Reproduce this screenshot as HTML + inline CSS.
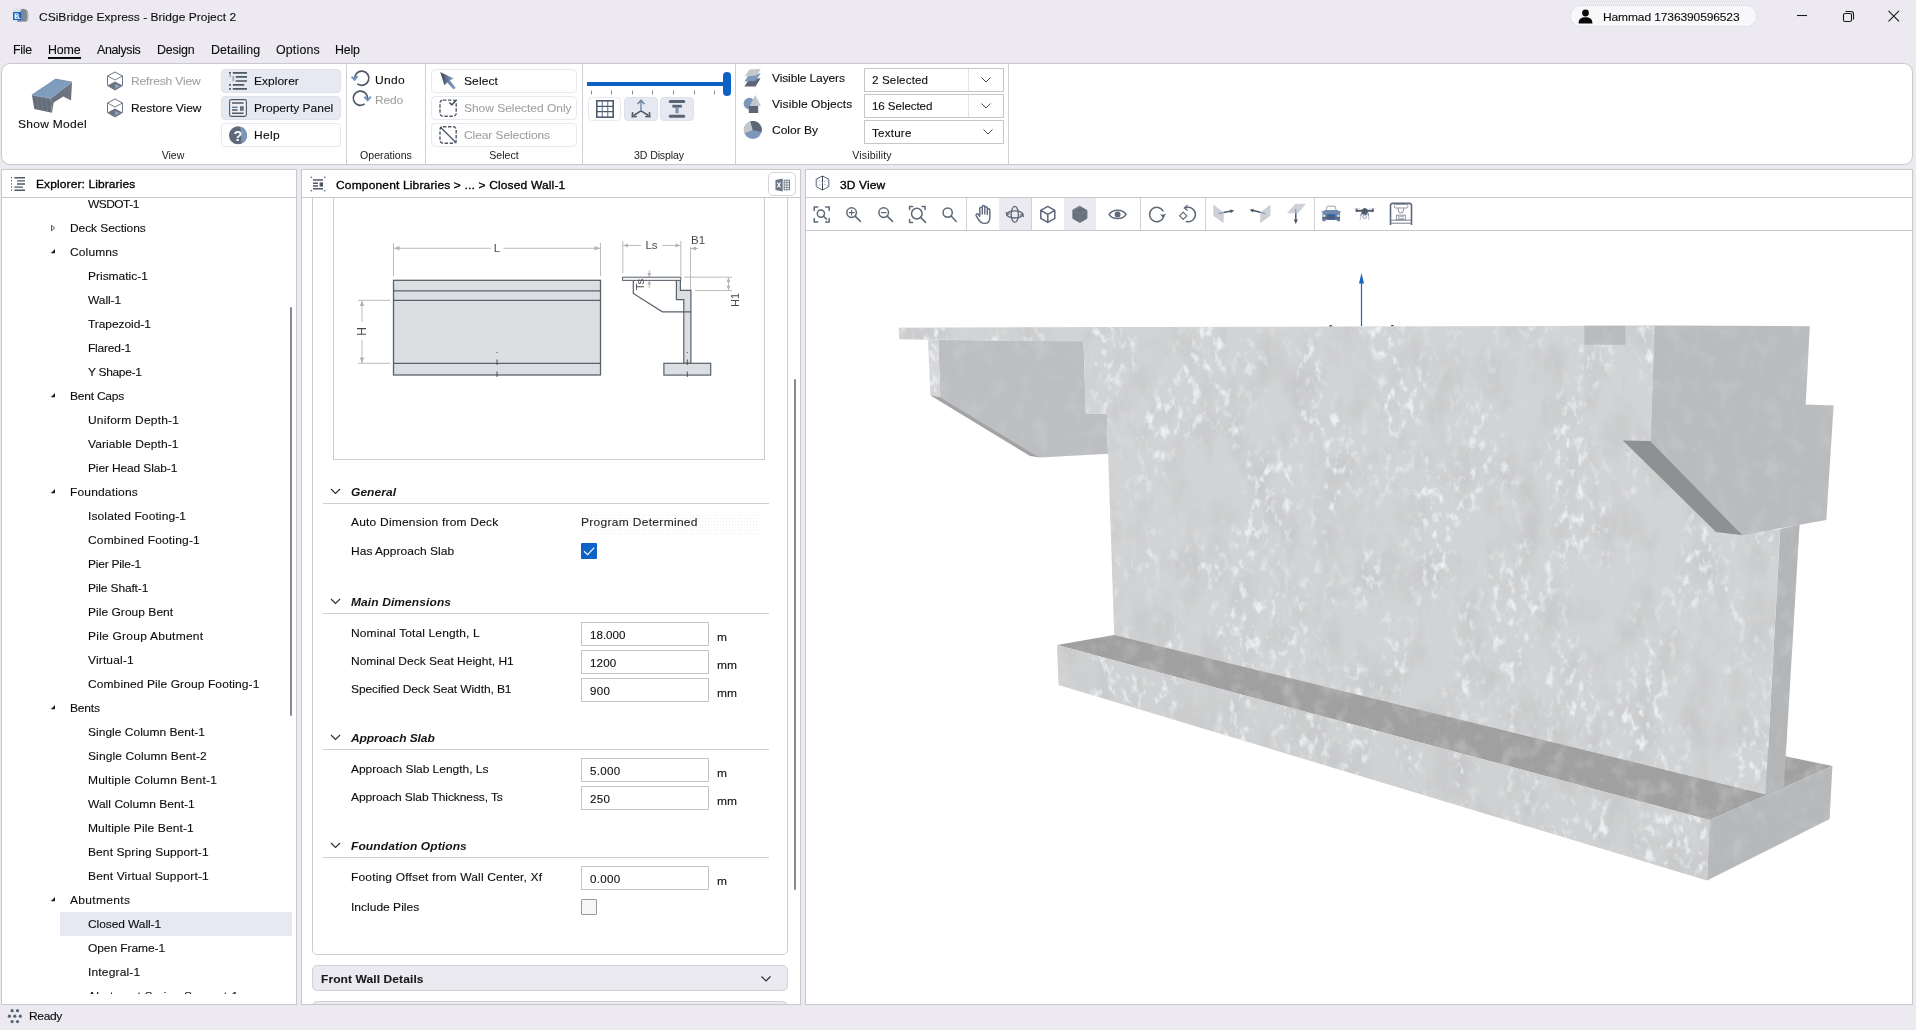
<!DOCTYPE html>
<html lang="en">
<head>
<meta charset="utf-8">
<title>CSiBridge Express - Bridge Project 2</title>
<style>
*{box-sizing:border-box;margin:0;padding:0}
html,body{width:1916px;height:1030px;overflow:hidden;background:#eceaf0}
body{will-change:transform;font-family:"Liberation Sans",sans-serif;font-size:12px;color:#111;position:relative}
.a{position:absolute}
.t{position:absolute;white-space:nowrap;line-height:14px;height:14px;font-size:11.5px;transform:scaleX(1.0435);transform-origin:0 0;color:#0c0c0c;-webkit-text-stroke:0.1px #0c0c0c}
.g{color:#a0a0a0;-webkit-text-stroke:0.08px #a0a0a0}
.panel{position:absolute;background:#fff;border:1px solid #c9c9cb}
.hsep{position:absolute;height:1px;background:#c9c9cb}
.vsep{position:absolute;width:1px;background:#d0d0d2}
.btn{position:absolute;border:1px solid #e8e8ee;border-radius:4px;background:#fff}
.btn.on{background:#e6e9f1;border-color:#dfe2ea}
.gl{position:absolute;white-space:nowrap;font-size:10.2px;transform:scaleX(1.04);line-height:13px;color:#1a1a1a;text-align:center}
.combo{position:absolute;border:1px solid #c6c6c8;background:#fff;height:23px}
.inp{position:absolute;border:1px solid #c4c4c6;background:#fff;height:24px;width:128px;left:581px}
.hd{position:absolute;white-space:nowrap;line-height:14px;font-size:11.5px;transform:scaleX(1.0435);transform-origin:0 0;font-weight:bold;font-style:italic;color:#141414;left:351px}
.ul{position:absolute;height:1px;background:#cfcfd1;left:323px;width:446px}
svg{position:absolute;overflow:visible}
</style>
</head>
<body>
<!-- TITLE BAR -->
<svg class="a" style="left:12px;top:7px" width="18" height="16" viewBox="0 0 18 16">
  <path d="M1.2 2.6 C3 0.9 6 0.5 9.2 1.6 L11.2 3.2 L9 12.5 L2 10 Z" fill="#d5d9df"/>
  <path d="M3.4 1.6 L4.4 4 M5.6 1.1 L6.4 3.6" stroke="#f4f5f7" stroke-width="0.9"/>
  <path d="M5.2 14.7 L9.2 2.4 C10.6 1.2 13.4 1.8 15.6 4.2 C16.8 7.4 16.6 11.4 15 14.5 Z" fill="#7c8795"/>
  <path d="M14.6 4 C15.9 7 15.8 11 14.6 13.6" stroke="#c9d0da" stroke-width="0.7" fill="none"/>
  <rect x="1" y="5.1" width="8.2" height="8" fill="#1565c0"/>
  <path d="M2.6 6.4 H5.4 V11.9 H2.6 Z" fill="#fff"/>
  <path d="M5.4 6.4 C7.4 6.4 7.4 8.9 5.4 8.9 C7.9 8.9 7.9 11.9 5.4 11.9" fill="#fff"/>
  <path d="M3.8 7.7 H5.2 M3.8 10.4 H5.6" stroke="#1565c0" stroke-width="0.9"/>
  <rect x="7.2" y="10.9" width="1.1" height="1.1" fill="#fff"/>
</svg>
<div class="t" style="left:39px;top:10px;letter-spacing:0.01px">CSiBridge Express - Bridge Project 2</div>

<div class="a" style="left:1570px;top:5px;width:187px;height:22px;border:1px dotted #cdcdd4;border-radius:11px;background:#f8f8fb"></div>
<svg class="a" style="left:1578px;top:9px" width="15" height="15" viewBox="0 0 15 15">
  <circle cx="7.5" cy="4" r="3.4" fill="#0a0a0a"/>
  <path d="M0.6 14.5 C0.6 9.5 3.5 8.2 7.5 8.2 C11.5 8.2 14.4 9.5 14.4 14.5 Z" fill="#0a0a0a"/>
</svg>
<div class="t" style="left:1603px;top:10px;letter-spacing:-0.11px">Hammad 1736390596523</div>

<svg class="a" style="left:1790px;top:5px" width="120" height="24" viewBox="0 0 120 24">
  <path d="M7 10.5 H17" stroke="#1a1a1a" stroke-width="1.1" fill="none"/>
  <rect x="53.5" y="8.5" width="8" height="8" rx="1.6" fill="none" stroke="#1a1a1a" stroke-width="1.1"/>
  <path d="M55.5 6.5 H61 a2.5 2.5 0 0 1 2.5 2.5 V14.5" fill="none" stroke="#1a1a1a" stroke-width="1.1"/>
  <path d="M98.5 5.8 L109 16.3 M109 5.8 L98.5 16.3" stroke="#1a1a1a" stroke-width="1.1" fill="none"/>
</svg>

<!-- MENU BAR -->
<div class="t" style="left:13px;top:43px;font-size:11.9px;letter-spacing:-0.26px">File</div>
<div class="t" style="left:48px;top:43px;font-size:11.9px;letter-spacing:-0.12px">Home</div>
<div class="a" style="left:48px;top:57px;width:33px;height:2px;background:#0c0c0c"></div>
<div class="t" style="left:97px;top:43px;font-size:11.9px;letter-spacing:-0.33px">Analysis</div>
<div class="t" style="left:157px;top:43px;font-size:11.9px;letter-spacing:-0.18px">Design</div>
<div class="t" style="left:211px;top:43px;font-size:11.9px;letter-spacing:0.1px">Detailing</div>
<div class="t" style="left:276px;top:43px;font-size:11.9px;letter-spacing:0.15px">Options</div>
<div class="t" style="left:335px;top:43px;font-size:11.9px;letter-spacing:-0.16px">Help</div>
<!-- RIBBON -->
<div class="a" style="left:1px;top:63px;width:1912px;height:102px;background:#fff;border:1px solid #c9c9cb;border-radius:9px"></div>
<div class="vsep" style="left:346px;top:64px;height:100px"></div>
<div class="vsep" style="left:425px;top:64px;height:100px"></div>
<div class="vsep" style="left:582px;top:64px;height:100px"></div>
<div class="vsep" style="left:735px;top:64px;height:100px"></div>
<div class="vsep" style="left:1008px;top:64px;height:100px"></div>

<!-- Show Model icon -->
<svg class="a" style="left:30px;top:77px" width="44" height="38" viewBox="0 0 44 38">
  <path d="M1.9 18.1 L25.7 2.1 L42 5.2 L20.6 21.5 Z" fill="#809dc0"/>
  <path d="M1.9 18.1 L20.6 21.5 L22 35.7 L4.3 32 Z" fill="#656d79"/>
  <path d="M20.6 21.5 L42 5.2 L41 23.5 L33.2 19.4 L23.7 25.5 L22 35.7 Z" fill="#6a727e"/>
  <path d="M7 20 L8.6 32.6 M11.5 20.8 L13 33.6 M16 21.6 L17.6 34.6 M36 11 L35.6 20.4 M39 8.6 L38.6 22" stroke="#7a838f" stroke-width="0.7" fill="none"/>
  <path d="M1.9 18.1 L25.7 2.1 L42 5.2" fill="none" stroke="#718aaa" stroke-width="0.9"/>
  <path d="M1.9 18.1 L20.6 21.5 L42 5.2" fill="none" stroke="#8ea7c6" stroke-width="0.6"/>
</svg>
<div class="t" style="left:18px;top:117px;letter-spacing:0.27px">Show Model</div>

<!-- Refresh / Restore view -->
<svg class="a" style="left:106px;top:71px" width="18" height="20" viewBox="0 0 18 20">
  <path d="M9 1 L16.5 5 L16.5 14.5 L9 19 L1.5 14.5 L1.5 5 Z" fill="#fff" stroke="#6b7482" stroke-width="1"/>
  <path d="M1.5 5 L9 9 L16.5 5" fill="none" stroke="#6b7482" stroke-width="0.9"/>
  <path d="M9 10.5 L16.5 14.5 L9 19 L1.5 14.5 Z" fill="#6b7482"/>
  <path d="M9 13 L14 15 L9 18 Z" fill="#86a0c2"/>
</svg>
<div class="t g" style="left:131px;top:74px;letter-spacing:-0.12px">Refresh View</div>
<svg class="a" style="left:106px;top:98px" width="18" height="20" viewBox="0 0 18 20">
  <path d="M9 1 L16.5 5 L16.5 14.5 L9 19 L1.5 14.5 L1.5 5 Z" fill="#fff" stroke="#6b7482" stroke-width="1"/>
  <path d="M1.5 5 L9 9 L16.5 5" fill="none" stroke="#6b7482" stroke-width="0.9"/>
  <path d="M9 10.5 L16.5 14.5 L9 19 L1.5 14.5 Z" fill="#6b7482"/>
  <path d="M9 13 L14 15 L9 18 Z" fill="#86a0c2"/>
</svg>
<div class="t" style="left:131px;top:101px;letter-spacing:-0.06px">Restore View</div>

<!-- Explorer / Property Panel / Help buttons -->
<div class="btn on" style="left:221px;top:69px;width:120px;height:24px"></div>
<div class="btn on" style="left:221px;top:96px;width:120px;height:24px"></div>
<div class="btn" style="left:221px;top:123px;width:120px;height:24px"></div>
<svg class="a" style="left:228px;top:71px" width="20" height="20" viewBox="0 0 20 20">
  <path d="M4.8 1.8 H19 M7.7 5.9 H19 M7.7 10 H19 M4.8 13.9 H16.2 M4.8 17.9 H19" stroke="#4e5968" stroke-width="1.7" fill="none"/>
  <g fill="#4e5968"><rect x="1" y="1" width="1.8" height="1.8"/><rect x="1" y="13" width="1.8" height="1.8"/><rect x="1" y="17" width="1.8" height="1.8"/></g>
  <path d="M2.2 3.4 V6 M5.2 5 V10.2" stroke="#4e5968" stroke-width="0.7" fill="none"/>
</svg>
<div class="t" style="left:254px;top:74px;letter-spacing:0.02px">Explorer</div>
<svg class="a" style="left:229px;top:99px" width="18" height="18" viewBox="0 0 18 18">
  <rect x="0.6" y="0.6" width="16.8" height="16.8" rx="1.8" fill="#eef0f5" stroke="#4e5968" stroke-width="1.1"/>
  <path d="M3 4 H14.6 M3 11 H8.6 M3 14.2 H14.6" stroke="#4e5968" stroke-width="1.6" fill="none"/>
  <path d="M3 8.3 H8.6" stroke="#5f7fa8" stroke-width="1.5" fill="none"/>
  <rect x="11" y="7.2" width="3.7" height="4.6" fill="#68727f"/>
</svg>
<div class="t" style="left:254px;top:101px;letter-spacing:-0.01px">Property Panel</div>
<svg class="a" style="left:228px;top:126px" width="20" height="19" viewBox="0 0 20 19">
  <circle cx="10" cy="9.3" r="9" fill="#5d6878"/>
  <path d="M11.5 0.5 A9 9 0 0 1 13.5 17.6 C13 12 14 5 11.5 0.5 Z" fill="#7d97bb"/>
  <text x="10" y="14.6" text-anchor="middle" font-family="Liberation Sans, sans-serif" font-size="14.5" font-weight="bold" fill="#fff">?</text>
</svg>
<div class="t" style="left:254px;top:128px;letter-spacing:0.34px">Help</div>
<div class="gl" style="left:143px;top:149px;width:60px;letter-spacing:-0.03px">View</div>

<!-- Operations -->
<svg class="a" style="left:351px;top:69px" width="19" height="19" viewBox="0 0 19 19">
  <path d="M3.7 9.8 A7.1 7.1 0 1 1 6.9 15.1" fill="none" stroke="#4e5968" stroke-width="1.7" stroke-linecap="round"/>
  <path d="M0.6 7.6 L3.6 10.8 L6.6 7.2" fill="none" stroke="#7394c0" stroke-width="2"/>
</svg>
<div class="t" style="left:375px;top:73px;letter-spacing:0.35px">Undo</div>
<svg class="a" style="left:352px;top:90px" width="20" height="17" viewBox="0 0 20 17">
  <path d="M15.5 8.6 A7.1 7.1 0 1 0 12 14.3" fill="none" stroke="#4e5968" stroke-width="1.7" stroke-linecap="round"/>
  <path d="M12.4 6.8 L15.6 10.2 L18.8 6.6" fill="none" stroke="#7394c0" stroke-width="2"/>
</svg>
<div class="t g" style="left:375px;top:93px;letter-spacing:-0.2px">Redo</div>
<div class="gl" style="left:356px;top:149px;width:60px;letter-spacing:-0.0px">Operations</div>

<!-- Select -->
<div class="btn" style="left:431px;top:69px;width:146px;height:24px"></div>
<div class="btn" style="left:431px;top:96px;width:146px;height:24px"></div>
<div class="btn" style="left:431px;top:123px;width:146px;height:24px"></div>
<svg class="a" style="left:439px;top:71px" width="18" height="20" viewBox="0 0 18 20">
  <defs><linearGradient id="cg" x1="0" y1="0" x2="1" y2="0"><stop offset="0.2" stop-color="#4a5463"/><stop offset="0.55" stop-color="#6f86a6"/><stop offset="1" stop-color="#7d9bc4"/></linearGradient></defs>
  <path d="M1.2 0.9 L14.6 7.6 L10.8 9.3 L16.6 16.8 L14.6 18.5 L8.3 11.4 L5.4 14.3 Z" fill="url(#cg)"/>
</svg>
<div class="t" style="left:464px;top:74px;letter-spacing:0.1px">Select</div>
<svg class="a" style="left:439px;top:98px" width="19" height="19" viewBox="0 0 19 19">
  <rect x="1" y="2.1" width="16.2" height="16.2" rx="3" fill="none" stroke="#4e5968" stroke-width="1.4" stroke-dasharray="3.4 1.6"/>
  <path d="M10.4 4.6 L12.9 6.8 L17.6 1.6" fill="none" stroke="#4e5968" stroke-width="1.6"/>
</svg>
<div class="t g" style="left:464px;top:101px;letter-spacing:-0.03px">Show Selected Only</div>
<svg class="a" style="left:439px;top:125px" width="19" height="19" viewBox="0 0 19 19">
  <rect x="1" y="1.8" width="16.2" height="16.4" rx="3" fill="none" stroke="#4e5968" stroke-width="1.4" stroke-dasharray="3.4 1.6"/>
  <path d="M1.2 2 L17.4 18" fill="none" stroke="#4e5968" stroke-width="1.3"/>
</svg>
<div class="t g" style="left:464px;top:128px;letter-spacing:-0.08px">Clear Selections</div>
<div class="gl" style="left:474px;top:149px;width:60px">Select</div>

<!-- 3D Display -->
<div class="a" style="left:587px;top:82px;width:139px;height:4px;background:#0b61c4"></div>
<div class="a" style="left:723px;top:72px;width:8px;height:24px;background:#0b61c4;border-radius:4px"></div>
<svg class="a" style="left:587px;top:90px" width="135" height="5" viewBox="0 0 135 5">
  <path d="M4.5 0.5 V4.5 M24.5 0.5 V4.5 M45.5 0.5 V4.5 M65.5 0.5 V4.5 M86.5 0.5 V4.5 M107.5 0.5 V4.5 M127.5 0.5 V4.5" stroke="#8b8b8e" stroke-width="1"/>
</svg>
<div class="btn" style="left:588px;top:97px;width:33px;height:24px"></div>
<div class="btn on" style="left:624px;top:97px;width:34px;height:24px"></div>
<div class="btn on" style="left:660px;top:97px;width:34px;height:24px"></div>
<svg class="a" style="left:596px;top:100px" width="18" height="18" viewBox="0 0 18 18">
  <path d="M6.3 1 V17 M11.7 1 V17" stroke="#7890b2" stroke-width="1.3"/>
  <path d="M1 6.3 H17 M1 11.7 H17" stroke="#505b6a" stroke-width="1.3"/>
  <rect x="0.8" y="0.8" width="16.4" height="16.4" fill="none" stroke="#505b6a" stroke-width="1.6"/>
</svg>
<svg class="a" style="left:631px;top:99px" width="20" height="20" viewBox="0 0 20 20">
  <path d="M10 11.8 V2.5" stroke="#7890b2" stroke-width="1.5" fill="none"/>
  <path d="M10 11.8 L2.5 16.5 M10 11.8 L17.5 16.5" stroke="#505b6a" stroke-width="1.5" fill="none"/>
  <path d="M6.6 5 L10 1.4 L13.4 5" fill="none" stroke="#6b7f9c" stroke-width="1.5"/>
  <path d="M1.6 13 L1.2 17.6 L5.8 17.4" fill="none" stroke="#505b6a" stroke-width="1.5"/>
  <path d="M18.4 13 L18.8 17.6 L14.2 17.4" fill="none" stroke="#505b6a" stroke-width="1.5"/>
</svg>
<svg class="a" style="left:668px;top:100px" width="18" height="18" viewBox="0 0 18 18">
  <path d="M2.2 1.6 H15.8 M2.2 16.3 H15.8" stroke="#5a6472" stroke-width="3" stroke-linecap="round"/>
  <rect x="4.4" y="4.8" width="9.4" height="2.8" fill="#5a6472"/>
  <rect x="7.5" y="7.4" width="3.1" height="5.8" fill="#7890b2"/>
</svg>
<div class="gl" style="left:629px;top:149px;width:60px;letter-spacing:-0.13px">3D Display</div>

<!-- Visibility -->
<svg class="a" style="left:743px;top:68px" width="19" height="20" viewBox="0 0 19 20">
  <path d="M6.2 11 L17.6 10.2 L12.6 18.4 L1.4 18.6 Z" fill="#5d6674"/>
  <path d="M6.2 6.2 L17.6 5.6 L12.4 13 L1.4 13.4 Z" fill="#7d97bb"/>
  <path d="M6.4 1.4 L17.8 1 L13.6 7.4 L1.8 8.4 Z" fill="#c3c6cb"/>
</svg>
<svg class="a" style="left:743px;top:94px" width="19" height="20" viewBox="0 0 19 20">
  <circle cx="6.4" cy="9.6" r="5.8" fill="#7d97bb"/>
  <rect x="5.8" y="11.6" width="9.4" height="7.4" fill="#5d6674"/>
  <path d="M12.2 1 L18 12 H6.6 Z" fill="#c3c6cb"/>
</svg>
<svg class="a" style="left:743px;top:120px" width="20" height="20" viewBox="0 0 20 20">
  <circle cx="9.8" cy="10" r="9" fill="#7d97bb"/>
  <path d="M9.8 10 L1.4 13.2 A9 9 0 0 1 7.4 1.3 Z" fill="#c3c6cb"/>
  <path d="M9.8 10 L7.4 1.3 A9 9 0 0 1 18.6 12 Z" fill="#5d6674"/>
</svg>
<div class="t" style="left:772px;top:71px;letter-spacing:-0.11px">Visible Layers</div>
<div class="t" style="left:772px;top:97px;letter-spacing:0.07px">Visible Objects</div>
<div class="t" style="left:772px;top:123px;letter-spacing:0.01px">Color By</div>
<div class="combo" style="left:864px;top:68px;width:140px;height:24px"></div>
<div class="combo" style="left:864px;top:94px;width:140px;height:24px"></div>
<div class="combo" style="left:864px;top:120px;width:140px;height:24px"></div>
<div class="a" style="left:968px;top:69px;width:1px;height:22px;background:#e4e4e7"></div>
<div class="a" style="left:968px;top:95px;width:1px;height:22px;background:#e4e4e7"></div>
<div class="t" style="left:872px;top:73px;font-size:11.1px;letter-spacing:0.14px">2 Selected</div>
<div class="t" style="left:872px;top:99px;font-size:11.1px;letter-spacing:-0.07px">16 Selected</div>
<div class="t" style="left:872px;top:126px;font-size:11.1px;letter-spacing:0.23px">Texture</div>
<svg class="a" style="left:980px;top:76px" width="12" height="8" viewBox="0 0 12 8"><path d="M1.5 1.5 L6 6 L10.5 1.5" fill="none" stroke="#4a4a4a" stroke-width="1"/></svg>
<svg class="a" style="left:980px;top:102px" width="12" height="8" viewBox="0 0 12 8"><path d="M1.5 1.5 L6 6 L10.5 1.5" fill="none" stroke="#4a4a4a" stroke-width="1"/></svg>
<svg class="a" style="left:982px;top:128px" width="12" height="8" viewBox="0 0 12 8"><path d="M1.5 1.5 L6 6 L10.5 1.5" fill="none" stroke="#4a4a4a" stroke-width="1"/></svg>
<div class="gl" style="left:842px;top:149px;width:60px;letter-spacing:0.15px">Visibility</div>
<!-- EXPLORER PANEL -->
<div class="panel" style="left:1px;top:169px;width:296px;height:836px"></div>
<div class="hsep" style="left:2px;top:197px;width:294px"></div>
<svg class="a" style="left:10px;top:176px" width="16" height="16" viewBox="0 0 16 16">
  <path d="M4.4 1.8 H15 M7 4.9 H15 M7 8 H15 M4.4 11.1 H13 M4.4 14.2 H15" stroke="#4e5968" stroke-width="1.4" fill="none"/>
  <path d="M1.5 1 V15" stroke="#4e5968" stroke-width="1" stroke-dasharray="1.3 1.8" fill="none"/>
</svg>
<div class="t" style="left:36px;top:177px;letter-spacing:0.1px;color:#000;-webkit-text-stroke:0.32px #000">Explorer: Libraries</div>
<div class="a" style="left:2px;top:198px;width:294px;height:796px;overflow:hidden">
<div class="a" style="left:58px;top:714px;width:232px;height:24px;background:#e6e9f1"></div>
<div class="t" style="left:86px;top:-1px;letter-spacing:-0.53px">WSDOT-1</div>
<div class="t" style="left:68px;top:23px;letter-spacing:-0.07px">Deck Sections</div>
<svg class="a" style="left:48px;top:25px" width="8" height="10" viewBox="0 0 8 10"><path d="M1.5 2.3 L4.7 5.1 L1.5 7.9 Z" fill="#f2f2f2" stroke="#4a4a4a" stroke-width="0.9"/></svg>
<div class="t" style="left:68px;top:47px;letter-spacing:0.12px">Columns</div>
<svg class="a" style="left:48px;top:50px" width="8" height="8" viewBox="0 0 8 8"><path d="M5 0.9 V5.2 H0.7 Z" fill="#1e1e1e"/></svg>
<div class="t" style="left:86px;top:71px;letter-spacing:-0.01px">Prismatic-1</div>
<div class="t" style="left:86px;top:95px;letter-spacing:-0.07px">Wall-1</div>
<div class="t" style="left:86px;top:119px;letter-spacing:-0.07px">Trapezoid-1</div>
<div class="t" style="left:86px;top:143px;letter-spacing:-0.2px">Flared-1</div>
<div class="t" style="left:86px;top:167px;letter-spacing:-0.31px">Y Shape-1</div>
<div class="t" style="left:68px;top:191px;letter-spacing:-0.21px">Bent Caps</div>
<svg class="a" style="left:48px;top:194px" width="8" height="8" viewBox="0 0 8 8"><path d="M5 0.9 V5.2 H0.7 Z" fill="#1e1e1e"/></svg>
<div class="t" style="left:86px;top:215px;letter-spacing:0.2px">Uniform Depth-1</div>
<div class="t" style="left:86px;top:239px;letter-spacing:0.08px">Variable Depth-1</div>
<div class="t" style="left:86px;top:263px;letter-spacing:-0.13px">Pier Head Slab-1</div>
<div class="t" style="left:68px;top:287px;letter-spacing:0.16px">Foundations</div>
<svg class="a" style="left:48px;top:290px" width="8" height="8" viewBox="0 0 8 8"><path d="M5 0.9 V5.2 H0.7 Z" fill="#1e1e1e"/></svg>
<div class="t" style="left:86px;top:311px;letter-spacing:0.11px">Isolated Footing-1</div>
<div class="t" style="left:86px;top:335px;letter-spacing:0.17px">Combined Footing-1</div>
<div class="t" style="left:86px;top:359px;letter-spacing:-0.21px">Pier Pile-1</div>
<div class="t" style="left:86px;top:383px;letter-spacing:-0.15px">Pile Shaft-1</div>
<div class="t" style="left:86px;top:407px;letter-spacing:0.03px">Pile Group Bent</div>
<div class="t" style="left:86px;top:431px;letter-spacing:0.23px">Pile Group Abutment</div>
<div class="t" style="left:86px;top:455px;letter-spacing:0.14px">Virtual-1</div>
<div class="t" style="left:86px;top:479px;letter-spacing:0.09px">Combined Pile Group Footing-1</div>
<div class="t" style="left:68px;top:503px;letter-spacing:-0.17px">Bents</div>
<svg class="a" style="left:48px;top:506px" width="8" height="8" viewBox="0 0 8 8"><path d="M5 0.9 V5.2 H0.7 Z" fill="#1e1e1e"/></svg>
<div class="t" style="left:86px;top:527px;letter-spacing:0.01px">Single Column Bent-1</div>
<div class="t" style="left:86px;top:551px;letter-spacing:0.1px">Single Column Bent-2</div>
<div class="t" style="left:86px;top:575px;letter-spacing:0.19px">Multiple Column Bent-1</div>
<div class="t" style="left:86px;top:599px;letter-spacing:0.03px">Wall Column Bent-1</div>
<div class="t" style="left:86px;top:623px;letter-spacing:0.12px">Multiple Pile Bent-1</div>
<div class="t" style="left:86px;top:647px;letter-spacing:0.09px">Bent Spring Support-1</div>
<div class="t" style="left:86px;top:671px;letter-spacing:0.13px">Bent Virtual Support-1</div>
<div class="t" style="left:68px;top:695px;letter-spacing:0.32px">Abutments</div>
<svg class="a" style="left:48px;top:698px" width="8" height="8" viewBox="0 0 8 8"><path d="M5 0.9 V5.2 H0.7 Z" fill="#1e1e1e"/></svg>
<div class="t" style="left:86px;top:719px;letter-spacing:-0.09px">Closed Wall-1</div>
<div class="t" style="left:86px;top:743px;letter-spacing:-0.08px">Open Frame-1</div>
<div class="t" style="left:86px;top:767px;letter-spacing:0.16px">Integral-1</div>
<div class="t" style="left:86px;top:791px;letter-spacing:0.19px">Abutment Spring Support-1</div>
</div>
<div class="a" style="left:290px;top:307px;width:2px;height:409px;background:#8a8a8c;border-radius:1px"></div>
<!-- STATUS BAR -->
<svg class="a" style="left:7px;top:1008px" width="16" height="16" viewBox="0 0 16 16">
 <g fill="#566273"><circle cx="5.1" cy="2.7" r="1.6"/><circle cx="10.5" cy="2.7" r="1.6"/><circle cx="2.4" cy="8.2" r="1.6"/><circle cx="7.8" cy="8.2" r="1.6"/><circle cx="13.3" cy="8.2" r="1.6"/><circle cx="5.1" cy="13.6" r="1.6"/><circle cx="10.5" cy="13.6" r="1.6"/></g>
</svg>
<div class="t" style="left:29px;top:1009px;color:#0a0a0a;letter-spacing:-0.32px">Ready</div>
<!-- PROPERTY PANEL -->
<div class="panel" style="left:301px;top:169px;width:500px;height:836px"></div>
<div class="hsep" style="left:302px;top:197px;width:498px"></div>
<svg class="a" style="left:310px;top:176px" width="16" height="16" viewBox="0 0 16 16">
  <g fill="#4e5968"><circle cx="1.2" cy="1.2" r="0.8"/><circle cx="14.8" cy="1.2" r="0.8"/><circle cx="1.2" cy="14.8" r="0.8"/><circle cx="14.8" cy="14.8" r="0.8"/></g>
  <path d="M3 4 H13 M3 7.2 H8 M3 10 H8 M3 12.8 H13" stroke="#4e5968" stroke-width="1.5" fill="none"/>
  <rect x="9.6" y="6.4" width="3.4" height="4.2" fill="#4e5968"/>
</svg>
<div class="t" style="left:336px;top:178px;color:#000;-webkit-text-stroke:0.32px #000;letter-spacing:0.15px">Component Libraries &gt; ... &gt; Closed Wall-1</div>
<div class="a" style="left:768px;top:172px;width:28px;height:24px;border:1px solid #d6d6da;border-radius:5px;background:#fff"></div>
<svg class="a" style="left:775px;top:178px" width="15.4" height="14" viewBox="0 0 16 14">
  <path d="M0.5 1.8 L8 0.3 V13.7 L0.5 12.2 Z" fill="#6b7686"/>
  <path d="M2.4 4.4 L5.8 9.6 M5.8 4.4 L2.4 9.6" stroke="#fff" stroke-width="1.2"/>
  <rect x="9.5" y="2" width="5.6" height="10" fill="none" stroke="#6b7686" stroke-width="1"/>
  <path d="M9.5 4.5 H15 M9.5 7 H15 M9.5 9.5 H15 M12.3 2 V12" stroke="#6b7686" stroke-width="0.8"/>
</svg>

<!-- scroll viewport of property panel -->
<div class="a" style="left:302px;top:198px;width:498px;height:806px;overflow:hidden">
  <!-- card: abs coords minus (302,198) -->
  <div class="a" style="left:10px;top:-40px;width:476px;height:797px;border:1px solid #cdcdd0;border-radius:5px;background:#fff"></div>
  <div class="a" style="left:31px;top:-30px;width:432px;height:292px;border:1px solid #cdcdd0;background:#fff"></div>
  <!-- Front Wall Details bar -->
  <div class="a" style="left:10px;top:767px;width:476px;height:26px;border:1px solid #d2d2d6;border-radius:5px;background:#eceaf1"></div>
  <div class="a" style="left:10px;top:803px;width:476px;height:26px;border:1px solid #d2d2d6;border-radius:5px;background:#eceaf1"></div>
</div>
<div class="t" style="left:321px;top:972px;font-weight:bold;color:#1a1a1a;letter-spacing:0.09px">Front Wall Details</div>
<svg class="a" style="left:760px;top:975px" width="12" height="8" viewBox="0 0 12 8"><path d="M1.5 1.5 L6 6 L10.5 1.5" fill="none" stroke="#2a2a2a" stroke-width="1.2"/></svg>
<div class="a" style="left:794px;top:379px;width:2px;height:511px;background:#8a8a8c;border-radius:1px"></div>

<!-- DRAWING -->
<svg class="a" style="left:334px;top:199px" width="430" height="260" viewBox="334 199 430 260" font-family="Liberation Sans, sans-serif">
  <g stroke="#b4b4b4" stroke-width="0.9" fill="none">
    <path d="M393.5 243 V276 M600.5 243 V276"/>
    <path d="M394 248.3 H491 M503.5 248.3 H600"/>
    <path d="M358 300.3 H390 M358 363.3 H390"/>
    <path d="M362 301 V322 M362 340 V363"/>
    <path d="M622.8 241 V273 M680.8 241 V276 M690.5 247 V290"/>
    <path d="M623 245.5 H641 M662 245.5 H680.5"/>
    <path d="M691 248.5 H698"/>
    <path d="M649.3 270 V277 M649.3 280.5 V288"/>
    <path d="M684 277.2 H732 M695 290.5 H732"/>
    <path d="M728.5 277.5 V290.3"/>
  </g>
  <g fill="#b4b4b4" stroke="none">
    <path d="M394 248.3 l5.5 -2.3 v4.6 z M600 248.3 l-5.5 -2.3 v4.6 z"/>
    <path d="M362 300.6 l-2.3 5.5 h4.6 z M362 363 l-2.3 -5.5 h4.6 z"/>
    <path d="M623 245.5 l5 -2 v4 z M680.5 245.5 l-5 -2 v4 z"/>
    <path d="M691 248.5 l5 -2 v4 z"/>
    <path d="M649.3 277 l-2 -4 h4 z M649.3 280.6 l-2 4 h4 z"/>
    <path d="M728.5 277.4 l-2 4.5 h4 z M728.5 290.3 l-2 -4.5 h4 z"/>
  </g>
  <!-- front view -->
  <rect x="393.5" y="280.3" width="207" height="94.7" fill="#dcdfe2" stroke="#59616b" stroke-width="1.3"/>
  <path d="M393.5 290.8 H600.5 M393.5 300.3 H600.5 M393.5 363.3 H600.5" stroke="#59616b" stroke-width="1.2" fill="none"/>
  <path d="M497 352 V353 M497 359.5 V365 M497 371.5 V377" stroke="#3c434c" stroke-width="0.9" fill="none"/>
  <!-- side view -->
  <path d="M676.4 280.3 V299.6 H683.8 V363.3 H690.9 V290.4 H680.4 V280.3 Z" fill="#dcdfe2" stroke="#59616b" stroke-width="1.2"/>
  <path d="M633.3 280.3 V293.4 L662.4 311.8 H690.9" fill="none" stroke="#59616b" stroke-width="1.2"/>
  <rect x="622.6" y="277.2" width="58.2" height="3.2" fill="#f4f5f6" stroke="#59616b" stroke-width="1"/>
  <rect x="663.9" y="363.3" width="46.8" height="11.8" fill="#dcdfe2" stroke="#59616b" stroke-width="1.2"/>
  <path d="M687.3 352 V353 M687.3 359.5 V365 M687.3 371.5 V377" stroke="#3c434c" stroke-width="0.9" fill="none"/>
  <g fill="#4a4a4a" font-size="11.5">
    <text x="497" y="252.3" text-anchor="middle">L</text>
    <text x="651.5" y="248.7" text-anchor="middle">Ls</text>
    <text x="691" y="244">B1</text>
    <text transform="translate(366.4,331.5) rotate(-90)" text-anchor="middle" font-size="12">H</text>
    <text transform="translate(643.6,284.6) rotate(-90)" text-anchor="middle" font-size="11.5">Ts</text>
    <text transform="translate(738.5,300) rotate(-90)" text-anchor="middle" font-size="11">H1</text>
  </g>
</svg>

<!-- PROPERTY ROWS -->
<svg class="a" style="left:330px;top:488px" width="11" height="7" viewBox="0 0 11 7"><path d="M1 1 L5.5 5.5 L10 1" fill="none" stroke="#2a2a2a" stroke-width="1.1"/></svg>
<div class="hd" style="top:485px;letter-spacing:0.05px">General</div>
<div class="ul" style="top:503px"></div>
<div class="t" style="left:351px;top:515px;letter-spacing:0.19px">Auto Dimension from Deck</div>
<div class="a" style="left:581px;top:514px;width:176px;height:21px;background-image:radial-gradient(#ededf0 0.6px,transparent 0.7px);background-size:3px 3px"></div>
<div class="t" style="left:581px;top:515px;color:#2a2a2a;letter-spacing:0.29px">Program Determined</div>
<div class="t" style="left:351px;top:544px;letter-spacing:0.02px">Has Approach Slab</div>
<div class="a" style="left:581px;top:543px;width:16px;height:16px;background:#0f62c6;border-radius:1px"></div>
<svg class="a" style="left:581px;top:543px" width="16" height="16" viewBox="0 0 16 16"><path d="M3 8.2 L6.6 11.6 L13.2 4.6" fill="none" stroke="#fff" stroke-width="1.2"/></svg>

<svg class="a" style="left:330px;top:598px" width="11" height="7" viewBox="0 0 11 7"><path d="M1 1 L5.5 5.5 L10 1" fill="none" stroke="#2a2a2a" stroke-width="1.1"/></svg>
<div class="hd" style="top:595px;letter-spacing:0.09px">Main Dimensions</div>
<div class="ul" style="top:613px"></div>
<div class="t" style="left:351px;top:626px;letter-spacing:0.12px">Nominal Total Length, L</div>
<div class="inp" style="top:622px"></div><div class="t" style="left:589.5px;top:628px;font-size:11.1px;letter-spacing:0.01px">18.000</div><div class="t" style="left:717px;top:630px">m</div>
<div class="t" style="left:351px;top:654px;letter-spacing:0.0px">Nominal Deck Seat Height, H1</div>
<div class="inp" style="top:650px"></div><div class="t" style="left:589.5px;top:656px;font-size:11.1px;letter-spacing:0.17px">1200</div><div class="t" style="left:717px;top:658px">mm</div>
<div class="t" style="left:351px;top:682px;letter-spacing:-0.1px">Specified Deck Seat Width, B1</div>
<div class="inp" style="top:678px"></div><div class="t" style="left:589.5px;top:684px;font-size:11.1px;letter-spacing:0.33px">900</div><div class="t" style="left:717px;top:686px">mm</div>

<svg class="a" style="left:330px;top:734px" width="11" height="7" viewBox="0 0 11 7"><path d="M1 1 L5.5 5.5 L10 1" fill="none" stroke="#2a2a2a" stroke-width="1.1"/></svg>
<div class="hd" style="top:731px;letter-spacing:-0.07px">Approach Slab</div>
<div class="ul" style="top:749px"></div>
<div class="t" style="left:351px;top:762px;letter-spacing:-0.03px">Approach Slab Length, Ls</div>
<div class="inp" style="top:758px"></div><div class="t" style="left:589.5px;top:764px;font-size:11.1px;letter-spacing:0.27px">5.000</div><div class="t" style="left:717px;top:766px">m</div>
<div class="t" style="left:351px;top:790px;letter-spacing:-0.09px">Approach Slab Thickness, Ts</div>
<div class="inp" style="top:786px"></div><div class="t" style="left:589.5px;top:792px;font-size:11.1px;letter-spacing:0.33px">250</div><div class="t" style="left:717px;top:794px">mm</div>

<svg class="a" style="left:330px;top:842px" width="11" height="7" viewBox="0 0 11 7"><path d="M1 1 L5.5 5.5 L10 1" fill="none" stroke="#2a2a2a" stroke-width="1.1"/></svg>
<div class="hd" style="top:839px;letter-spacing:0.1px">Foundation Options</div>
<div class="ul" style="top:857px"></div>
<div class="t" style="left:351px;top:870px;letter-spacing:0.16px">Footing Offset from Wall Center, Xf</div>
<div class="inp" style="top:866px"></div><div class="t" style="left:589.5px;top:872px;font-size:11.1px;letter-spacing:0.27px">0.000</div><div class="t" style="left:717px;top:874px">m</div>
<div class="t" style="left:351px;top:900px;letter-spacing:0.01px">Include Piles</div>
<div class="a" style="left:581px;top:899px;width:16px;height:16px;border:1px solid #9a9a9d;background:#f6f6f8;border-radius:1px"></div>
<!-- 3D VIEW PANEL -->
<div class="panel" style="left:805px;top:169px;width:1108px;height:836px"></div>
<div class="hsep" style="left:806px;top:197px;width:1106px"></div>
<div class="hsep" style="left:806px;top:230px;width:1106px"></div>
<svg class="a" style="left:815px;top:175px" width="15" height="16" viewBox="0 0 15 16">
  <path d="M7.5 1 L13.8 4.2 V11.6 L7.5 15 L1.2 11.6 V4.2 Z" fill="none" stroke="#5d6878" stroke-width="1"/>
  <path d="M7.5 1 V15" stroke="#3a4350" stroke-width="1"/>
  <path d="M1.2 11.6 L7.5 8.4 L13.8 11.6 M1.2 4.2 L7.5 7.4 L13.8 4.2" stroke="#8d97a6" stroke-width="0.8" stroke-dasharray="1.6 1.4" fill="none"/>
</svg>
<div class="t" style="left:840px;top:178px;color:#000;-webkit-text-stroke:0.32px #000;letter-spacing:0.1px">3D View</div>

<!-- toolbar -->
<div class="a" style="left:999px;top:198px;width:32px;height:32px;background:#eceaf1"></div>
<div class="a" style="left:1064px;top:198px;width:32px;height:32px;background:#eceaf1"></div>
<div class="vsep" style="left:966px;top:198px;height:32px"></div>
<div class="vsep" style="left:1031px;top:198px;height:32px"></div>
<div class="vsep" style="left:1140px;top:198px;height:32px"></div>
<div class="vsep" style="left:1205px;top:198px;height:32px"></div>
<div class="vsep" style="left:1314px;top:198px;height:32px"></div>
<svg class="a" style="left:806px;top:198px" width="620" height="32" viewBox="806 198 620 32" fill="none" stroke="#5d6878" stroke-width="1.5" stroke-linecap="round" stroke-linejoin="round">
  <!-- 1 zoom selection -->
  <g transform="translate(821.7,214.4)">
    <path d="M-7.5 -4 V-7.5 H-4 M4 -7.5 H7.5 V-4 M7.5 4 V7.5 H4 M-4 7.5 H-7.5 V4"/>
    <circle cx="-0.8" cy="-0.8" r="3.6"/><path d="M1.9 1.9 L4.8 4.8"/>
  </g>
  <!-- 2 zoom in -->
  <g transform="translate(853.4,214.4)">
    <circle cx="-1.8" cy="-1.8" r="4.8"/><path d="M1.7 1.7 L7 7"/><path d="M-4.2 -1.8 H0.6 M-1.8 -4.2 V0.6" stroke-width="1.1"/>
  </g>
  <!-- 3 zoom out -->
  <g transform="translate(885.5,214.4)">
    <circle cx="-1.8" cy="-1.8" r="4.8"/><path d="M1.7 1.7 L7 7"/><path d="M-4.2 -1.8 H0.6" stroke-width="1.1"/>
  </g>
  <!-- 4 zoom extents -->
  <g transform="translate(917.6,214.4)">
    <path d="M-8 -5 V-8 H-5 M4.5 -8 H7.5 V-5 M-5 8 H-8 V5"/>
    <circle cx="-0.8" cy="-0.8" r="5.3"/><path d="M3 3 L8 8"/>
  </g>
  <!-- 5 zoom -->
  <g transform="translate(949.3,214.4)">
    <circle cx="-1.6" cy="-1.8" r="4.6"/><path d="M1.8 1.6 L7 7"/>
  </g>
  <!-- 6 pan hand -->
  <g transform="translate(983.4,214.4)" stroke-width="1.4">
    <path d="M-3.6 1 V-6 a1.25 1.25 0 0 1 2.5 0 V-0.5 M-1.1 -6.6 V-7.6 a1.25 1.25 0 0 1 2.5 0 V-0.5 M1.4 -6.4 a1.25 1.25 0 0 1 2.5 0 V0 M3.9 -4.4 a1.25 1.25 0 0 1 2.5 0 V3 C6.4 7 4 9 1 9 C-2 9 -3.5 7.5 -5 5 L-7.3 1.2 a1.3 1.3 0 0 1 2.1 -1.4 L-3.6 1.8"/>
  </g>
  <!-- 7 orbit -->
  <g transform="translate(1014.8,214.4)" stroke-width="1.3">
    <ellipse cx="0" cy="0" rx="8" ry="3.6"/><ellipse cx="0" cy="0" rx="3.6" ry="8"/>
    <path d="M-8.6 -2.2 L-8 1 L-5.4 -0.8 M8.6 2.2 L8 -1 L5.4 0.8" stroke-width="1.1"/>
  </g>
  <!-- 8 cube outline -->
  <g transform="translate(1047.8,214.4)">
    <path d="M0 -8 L7 -4 V4 L0 8 L-7 4 V-4 Z M-7 -4 L0 0 L7 -4 M0 0 V8"/>
  </g>
  <!-- 9 cube solid -->
  <g transform="translate(1079.9,214.4)" fill="#67727f" stroke="#67727f" stroke-width="1">
    <path d="M0 -8 L7 -4 V4 L0 8 L-7 4 V-4 Z"/><path d="M-7 -4 L0 0 L7 -4 M0 0 V8" stroke="#7c8794" stroke-width="0.6" fill="none"/>
  </g>
  <!-- 10 eye -->
  <g transform="translate(1117.6,214.4)">
    <path d="M-8.5 0 C-5 -5.6 5 -5.6 8.5 0 C5 5.6 -5 5.6 -8.5 0 Z"/><circle cx="0" cy="0" r="2.2" fill="#5d6878"/>
  </g>
  <!-- 11 rotate cw -->
  <g transform="translate(1156.7,214.4)">
    <path d="M6.4 -3.4 A7.2 7.2 0 1 0 7 2.2"/><path d="M8.6 -0.2 L6.6 3 L4.2 0.4" fill="#5d6878" stroke-width="1"/>
  </g>
  <!-- 12 rotate ccw w/ diamond -->
  <g transform="translate(1188.4,214.4)">
    <path d="M-3 -6.6 A7.2 7.2 0 1 1 -2 7"/><path d="M-1.2 -9 L-4.2 -6.4 L-1 -4.2" stroke-width="1.2"/>
    <path d="M-5.2 -2.2 L-1.6 1.4 L-5.2 5 L-8.8 1.4 Z" stroke-width="1.2"/>
  </g>
</svg>
<!-- view-plane icons, car, drone, machine -->
<svg class="a" style="left:1206px;top:198px" width="220" height="32" viewBox="1206 198 220 32">
  <g transform="translate(1223.5,214.4)">
    <path d="M-10.2 -9.8 L0.2 -2 V8.8 L-10.2 1.4 Z" fill="#cdd1d7"/>
    <path d="M-4.7 -0.8 L0.2 -1.8" stroke="#6f8fbd" stroke-width="1" fill="none"/>
    <path d="M0.2 -1.8 L7.5 -3.3" stroke="#4e5968" stroke-width="1.5" fill="none"/>
    <path d="M10.8 -3.9 L6.4 -5 L7.2 -1.2 Z" fill="#4e5968"/>
  </g>
  <g transform="translate(1260.3,214.4)">
    <path d="M-0.1 -2 L10.2 -9.8 V1.4 L-0.1 8.8 Z" fill="#cdd1d7"/>
    <path d="M5 -0.8 L-0.1 -2.1" stroke="#6f8fbd" stroke-width="1" fill="none"/>
    <path d="M-0.1 -2.1 L-7.2 -3.8" stroke="#4e5968" stroke-width="1.5" fill="none"/>
    <path d="M-10.8 -4.7 L-6.4 -5.6 L-7.4 -1.9 Z" fill="#4e5968"/>
  </g>
  <g transform="translate(1295.3,214.4)">
    <path d="M-8.4 -1.2 L0.2 -10.6 H10.5 L2.8 -1.2 Z" fill="#cdd1d7"/>
    <path d="M0.5 -5.5 V-1.2" stroke="#6f8fbd" stroke-width="1" fill="none"/>
    <path d="M0.5 -1.2 V6" stroke="#4e5968" stroke-width="1.5" fill="none"/>
    <path d="M0.5 9.6 L-1.6 5 H2.6 Z" fill="#4e5968"/>
  </g>
  <g transform="translate(1331,214.4)">
    <path d="M-5.4 -3 L-3.8 -8.2 H4 L5.6 -3 Z" fill="#fbfcfd" stroke="#8f9aab" stroke-width="0.9"/>
    <path d="M-8.6 -1.4 C-8.6 -3.6 -6.8 -4.4 -5.2 -4.4 H5.6 C7.2 -4.4 9 -3.6 9 -1.4 V4.6 H-8.6 Z" fill="#7089ae"/>
    <path d="M-8.6 2.6 H9 V5.4 H-8.6 Z" fill="#5f6b7c"/>
    <rect x="-8.6" y="4.6" width="3.2" height="2.2" rx="0.6" fill="#5b7fb0"/><rect x="5.8" y="4.6" width="3.2" height="2.2" rx="0.6" fill="#5b7fb0"/>
    <rect x="-4.2" y="-0.4" width="8.6" height="5.4" fill="#56627a"/>
    <g fill="#0f62c6"><rect x="-2.8" y="0.4" width="1.1" height="1.1"/><rect x="-0.8" y="0.4" width="1.1" height="1.1"/><rect x="1.2" y="0.4" width="1.1" height="1.1"/><rect x="3" y="0.4" width="1.1" height="1.1"/>
    <rect x="-3.8" y="2.3" width="1.1" height="1.1"/><rect x="-1.8" y="2.3" width="1.1" height="1.1"/><rect x="0.2" y="2.3" width="1.1" height="1.1"/><rect x="2.2" y="2.3" width="1.1" height="1.1"/>
    <rect x="-1.4" y="4.2" width="1.1" height="1.1"/><rect x="0.6" y="4.2" width="1.1" height="1.1"/><rect x="2.6" y="4.2" width="1.1" height="1.1"/></g>
    <circle cx="-7" cy="1.4" r="1.1" fill="#e9eef5"/><circle cx="7.4" cy="1.4" r="1.1" fill="#e9eef5"/>
    <path d="M-9.6 -2.6 H-7.6 M8 -2.6 H10" stroke="#7f8b9c" stroke-width="1"/>
  </g>
  <g transform="translate(1364.5,214.4)">
    <path d="M-10.4 -6 H-4.6 M4.8 -6 H11" stroke="#c2c8d2" stroke-width="0.7"/>
    <path d="M-8.6 -4.5 L-3 -4.7 L0.2 -6.6 L3.4 -4.7 L9 -4.5 V-2.6 H3.6 L2.2 0.4 H-1.8 L-3.2 -2.6 H-8.6 Z" fill="#4e5968"/>
    <rect x="-8.8" y="-5.6" width="1.8" height="3" fill="#4e5968"/><rect x="7.4" y="-5.6" width="1.8" height="3" fill="#4e5968"/>
    <path d="M-3 -1.6 L-4.5 5.8 M3.4 -1.6 L4.7 5.8" stroke="#c2c8d2" stroke-width="1.1" fill="none"/>
    <path d="M-3 -1.8 L-3.7 1.6 M3.4 -1.8 L4 1.6" stroke="#6f8fbd" stroke-width="1" fill="none"/>
    <circle cx="0.2" cy="2.4" r="1.8" fill="#fff" stroke="#8f9aab" stroke-width="0.9"/>
  </g>
  <g transform="translate(1400.5,214.4)" fill="none">
    <rect x="-10" y="5.2" width="21" height="1.3" fill="#979da6"/>
    <rect x="-10" y="8.2" width="21" height="1.3" fill="#979da6"/>
    <path d="M-10 10.6 V-8.8 a2.2 2.2 0 0 1 2.2 -2.2 H8.8 a2.2 2.2 0 0 1 2.2 2.2 V10.6" stroke="#5d6878" stroke-width="1.6"/>
    <rect x="-6.2" y="-10" width="13.6" height="3.6" rx="1.4" stroke="#8d939c" stroke-width="1"/>
    <path d="M-2.6 -6.2 L-1.3 -1.6 H2.1 L3.4 -6.2" stroke="#8d939c" stroke-width="1"/>
    <rect x="-4.1" y="0.8" width="8.9" height="4.4" stroke="#8d939c" stroke-width="1"/>
    <rect x="-2" y="2.2" width="4.6" height="1.8" stroke="#a0a6ae" stroke-width="0.8"/>
  </g>
</svg>
<!-- 3D MODEL -->
<svg class="a" style="left:806px;top:231px" width="1106" height="773" viewBox="806 231 1106 773">
  <defs>
    <filter id="conc" x="0" y="0" width="100%" height="100%" color-interpolation-filters="sRGB">
      <feTurbulence type="fractalNoise" baseFrequency="0.13 0.08" numOctaves="4" seed="7" result="n"/>
      <feColorMatrix in="n" type="matrix" values="0 0 0 0 0  0 0 0 0 0  0 0 0 0 0  3 0 0 0 -1.55" result="a"/>
      <feTurbulence type="fractalNoise" baseFrequency="0.022 0.009" numOctaves="2" seed="11" result="m"/>
      <feColorMatrix in="m" type="matrix" values="0 0 0 0 0  0 0 0 0 0  0 0 0 0 0  0 5 0 0 -2.1" result="ma"/>
      <feComposite in="a" in2="ma" operator="arithmetic" k1="1.15" k2="0.12" k3="0" k4="0" result="am"/>
      <feFlood flood-color="#eceef0" result="w"/>
      <feComposite in="w" in2="am" operator="in" result="spots"/>
      <feTurbulence type="fractalNoise" baseFrequency="0.035 0.02" numOctaves="3" seed="21" result="n2"/>
      <feColorMatrix in="n2" type="matrix" values="0 0 0 0 0  0 0 0 0 0  0 0 0 0 0  0 0.6 0 0 -0.27" result="a2"/>
      <feFlood flood-color="#a8aaad" result="d"/>
      <feComposite in="d" in2="a2" operator="in" result="dark"/>
      <feMerge result="tex"><feMergeNode in="dark"/><feMergeNode in="spots"/></feMerge>
      <feComposite in="tex" in2="SourceAlpha" operator="in" result="texc"/>
      <feMerge><feMergeNode in="SourceGraphic"/><feMergeNode in="texc"/></feMerge>
    </filter>
    <filter id="conc2" x="0" y="0" width="100%" height="100%" color-interpolation-filters="sRGB">
      <feTurbulence type="fractalNoise" baseFrequency="0.06 0.05" numOctaves="3" seed="3" result="n"/>
      <feColorMatrix in="n" type="matrix" values="0 0 0 0 0  0 0 0 0 0  0 0 0 0 0  1.2 0 0 0 -0.56" result="a"/>
      <feFlood flood-color="#cbccce" result="w"/>
      <feComposite in="w" in2="a" operator="in" result="spots"/>
      <feComposite in="spots" in2="SourceAlpha" operator="in" result="texc"/>
      <feMerge><feMergeNode in="SourceGraphic"/><feMergeNode in="texc"/></feMerge>
    </filter>
  </defs>
  <!-- z axis -->
  <path d="M1361.5 326 V282" stroke="#1565c0" stroke-width="1.2" fill="none"/>
  <path d="M1361.5 273 L1364 283.4 H1359 Z" fill="#1565c0"/>
  <path d="M1328.6 326.4 l2.2 -1.6 l2 1.6 z M1390.6 326.2 l1.4 -1.5 l2.6 1.5 z" fill="#2a2a2a"/>
  <g filter="url(#conc2)">
    <!-- footing top -->
    <path d="M1057 645 L1709.5 820 L1832.4 766 L1160 627 Z" fill="#a0a0a1"/>
    <!-- footing right -->
    <path d="M1709.5 820 L1832.4 766 L1829.6 819 L1707 880.5 Z" fill="#b6b8ba"/>
    <!-- wall right side strip -->
    <path d="M1780.2 529 L1799.6 524.5 L1784 786 L1765.6 794.4 Z" fill="#b3b5b7"/>
    <!-- left wing side -->
    <path d="M938.2 340 L1083.5 341 L1085.8 413.3 L1106.8 414 L1108 453.7 L1040 457.6 L940.3 397 Z" fill="#bcbec0"/>
  </g>
  <g filter="url(#conc)">
    <!-- footing front -->
    <path d="M1057 645 L1709.5 820 L1707 880.5 L1058.5 685 Z" fill="#d0d1d2"/>
    <!-- left wing end face -->
    <path d="M928 339.5 L938.2 340 L940.3 397 L930.5 395.4 Z" fill="#d6d7d9"/>
    <!-- front wall -->
    <path d="M1083.5 338 L1654.7 325.6 L1650.4 441 L1622.5 440.3 L1715.9 532 L1780.2 529.3 L1765.6 794.4 L1114.2 635.1 L1106.8 414 L1085.8 413.3 Z" fill="#d2d3d4"/>
    <!-- approach slab strip -->
    <path d="M898.6 327.7 L1654.7 325.6 L1654.7 344 L1108 342 L899.4 339.3 Z" fill="#d2d3d4"/>
  </g>
  <g filter="url(#conc2)">
    <!-- dark patch -->
    <path d="M1584.4 325.7 H1625.4 V344.7 H1584.4 Z" fill="#b9bbbd"/>
    <!-- right wing face -->
    <path d="M1654.7 325.5 L1809.8 326.2 L1805.7 404.6 L1833.6 405.4 L1826.3 519.9 L1742.6 535.2 L1650.4 441 Z" fill="#b9bbbd"/>
  </g>
  <path d="M1622.5 440.3 L1650.4 441 L1742.6 535.2 L1715.9 532 Z" fill="#8f9092"/>
  <path d="M930.5 395.4 L940.3 397 L1040 457.6 L1029.9 456 Z" fill="#a3a4a6"/>
</svg>
</body>
</html>
